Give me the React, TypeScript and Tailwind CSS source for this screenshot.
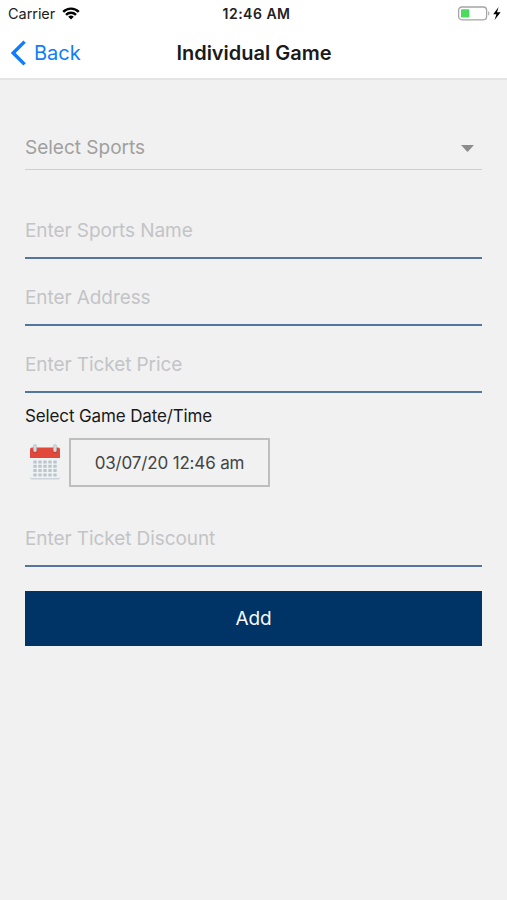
import type { ReactNode } from 'react'

function StatusBar() {
  return (
    <div className="grid h-[27px] grid-cols-3 items-center pl-2 pr-1.5 text-[#222]">
      <div className="flex items-center gap-[7px] text-[14.5px] tracking-[-0.05px]">
        <span>Carrier</span>
        <svg width="18" height="13" viewBox="0 0 18 13" fill="none" stroke="#000" strokeWidth="2.4">
          <path d="M1.2 4.9a11 11 0 0 1 15.6 0" />
          <path d="M4 7.9a7 7 0 0 1 10 0" />
          <path d="M9 12.6 6.2 9.8a4 4 0 0 1 5.6 0Z" fill="#000" stroke="none" />
        </svg>
      </div>
      <span className="pl-1 text-center text-[14px] font-semibold tracking-[0.5px]">12:46 AM</span>
      <div className="flex items-center justify-end">
        <svg width="44" height="15" viewBox="0 0 44 15">
          <rect x="1.6" y="1" width="28" height="12.8" rx="3.2" fill="none" stroke="#a5a5a5" strokeWidth="1.3" />
          <rect x="4" y="3.2" width="8.4" height="8.4" rx="0.8" fill="#4cd95f" />
          <path d="M31.2 5.2c1.6.5 1.6 3.9 0 4.4Z" fill="#a5a5a5" />
          <path d="M41.6 1 36.2 8.2h3.2L37.6 14l6-7.8h-3.6Z" fill="#000" />
        </svg>
      </div>
    </div>
  )
}

function NavBar() {
  return (
    <div className="grid h-[51px] grid-cols-3 items-center">
      <button className="flex items-center gap-2 pl-[11px] text-left text-[20px] text-[#0f7dfb]">
        <svg width="15" height="26" viewBox="0 0 15 26" fill="none" stroke="currentColor" strokeWidth="3.4">
          <path d="M13.6 1.6 2.2 13l11.4 11.4" />
        </svg>
        <span>Back</span>
      </button>
      <h1 className="pl-px text-center text-[20px] font-semibold whitespace-nowrap text-[#1a1a1a]">
        Individual Game
      </h1>
    </div>
  )
}

function Field({ children }: { children: ReactNode }) {
  return (
    <div className="flex h-[67px] items-center border-b-2 border-[#54769c] pt-3.5 text-[19px] tracking-[-0.08px] text-[#c3c4c6]">
      {children}
    </div>
  )
}

function CalendarIcon() {
  const cols = [6, 11, 16, 21, 26]
  const rows = [18, 22.3, 26.6, 30.9]

  return (
    <svg width="32" height="37" viewBox="0 0 32 37">
      <rect x="1" y="5" width="30" height="30.5" rx="2" fill="#cbd4d8" />
      <rect x="1" y="5" width="30" height="28.9" rx="1.5" fill="#eef2f3" />
      <path d="M1 5.5A2 2 0 0 1 3 3.5h26a2 2 0 0 1 2 2V14H1Z" fill="#e2473b" />
      {rows.map(y =>
        cols.map(x => (
          <rect key={`${x}-${y}`} x={x - 1.7} y={y - 1.5} width="3.4" height="3" rx="0.6" fill="#bcc6ce" />
        ))
      )}
      {[6, 26].map(x => (
        <g key={x}>
          <circle cx={x} cy="6.8" r="2.4" fill="#b83228" />
          <rect x={x - 1.6} y="0.5" width="3.2" height="7.5" rx="1.6" fill="#d3dadd" stroke="#a8b2b6" strokeWidth="0.5" />
        </g>
      ))}
    </svg>
  )
}

export default function App() {
  return (
    <div className="flex min-h-screen flex-col bg-[#f1f1f1] font-['Inter','Liberation_Sans',sans-serif]">
      <header className="h-20 border-b-2 border-[#e4e4e4] bg-white">
        <StatusBar />
        <NavBar />
      </header>

      <main className="flex flex-col px-[25px] pt-[45px]">
        <div className="flex h-[45px] items-center justify-between border-b border-[#cfcfcf] pt-0.5 pr-2 text-[19px] text-[#a0a0a0]">
          <span>Select Sports</span>
          <svg width="13" height="7" viewBox="0 0 13 7">
            <path d="M0 0h13L6.5 7Z" fill="#8c8c8c" />
          </svg>
        </div>

        <div className="mt-[22px]">
          <Field>Enter Sports Name</Field>
          <Field>Enter Address</Field>
          <Field>Enter Ticket Price</Field>
        </div>

        <div className="mt-[11px] text-[17px] leading-6 tracking-[-0.13px] text-[#1a1a1a]">Select Game Date/Time</div>
        <div className="mt-2.5 flex items-center pl-1">
          <CalendarIcon />
          <button className="ml-2 h-[49px] w-[201px] border-2 border-[#bebebe] pt-0.5 text-[17px] tracking-[-0.15px] whitespace-nowrap text-[#444]">
            03/07/20 12:46 am
          </button>
        </div>

        <div className="mt-[13px]">
          <Field>Enter Ticket Discount</Field>
        </div>

        <button className="mt-6 h-[55px] bg-[#003366] pt-0.5 text-[19px] tracking-[-0.1px] text-[#f5f8fb]">Add</button>
      </main>
    </div>
  )
}
